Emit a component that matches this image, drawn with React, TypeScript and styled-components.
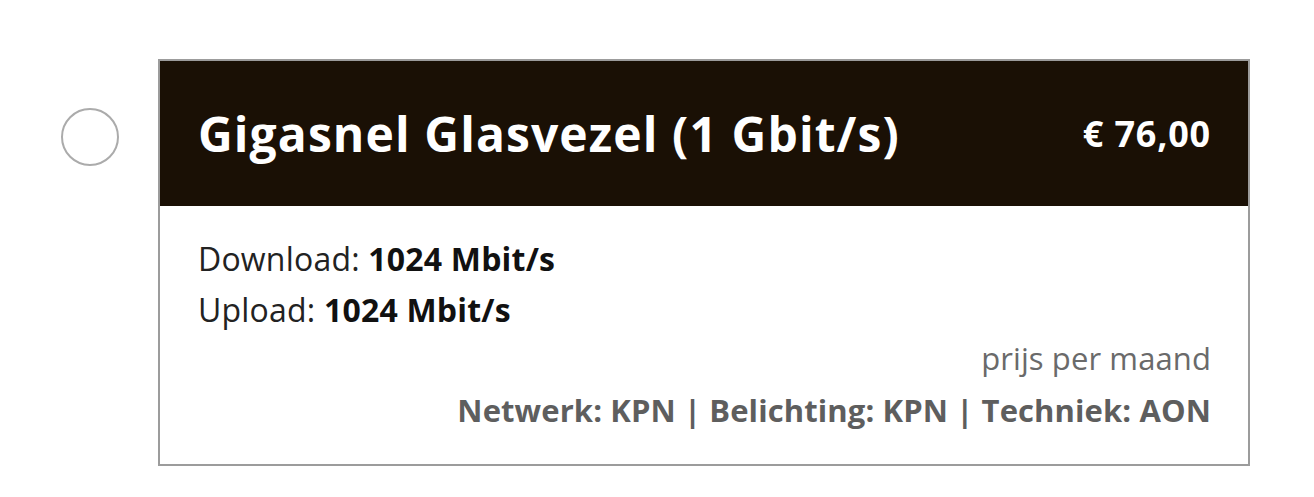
import React from "react";
import styled, { createGlobalStyle } from "styled-components";

const GlobalStyle = createGlobalStyle`
  html, body {
    margin: 0;
    padding: 0;
    background: #ffffff;
  }
  body {
    font-family: "Open Sans", "Noto Sans", "Liberation Sans", sans-serif;
  }
`;

const Page = styled.div`
  display: flex;
  align-items: flex-start;
  padding: 59px 0 0 61px;
`;

const RadioColumn = styled.div`
  width: 97px;
  flex: none;
  padding-top: 49px;
`;

const Radio = styled.span`
  display: block;
  width: 54px;
  height: 54px;
  border: 2px solid #ababab;
  border-radius: 50%;
  background: #fff;
`;

const Card = styled.div`
  width: 1088px;
  border: 2px solid #9c9c9c;
  flex: none;
`;

const Header = styled.div`
  height: 145px;
  background: #1a1005;
  display: flex;
  align-items: center;
  justify-content: space-between;
  padding: 0 37px 0 38px;
  color: #ffffff;
`;

const Title = styled.h2`
  margin: 0;
  font-size: 48px;
  font-weight: 700;
  line-height: 1;
  letter-spacing: 1.1px;
`;

const Price = styled.span`
  font-size: 36px;
  font-weight: 700;
  line-height: 1;
  letter-spacing: 0.8px;
`;

const Body = styled.div`
  padding: 27px 37px 28px 38px;
`;

const SpeedLine = styled.div`
  font-size: 32px;
  letter-spacing: 0.2px;
  line-height: 51px;
  color: #222;
`;

const Value = styled.strong`
  font-weight: 700;
  color: #111;
`;

const Footer = styled.div`
  margin-top: -3px;
  text-align: right;
  font-size: 31px;
  letter-spacing: 0.1px;
`;

const FooterLine = styled.div<{ $bold?: boolean }>`
  line-height: 52px;
  font-weight: ${(p) => (p.$bold ? 700 : 400)};
  color: ${(p) => (p.$bold ? "#5e5e5e" : "#6a6a6a")};
`;

export default function App() {
  return (
    <>
      <GlobalStyle />
      <Page>
        <RadioColumn>
          <Radio />
        </RadioColumn>
        <Card>
          <Header>
            <Title>Gigasnel Glasvezel (1 Gbit/s)</Title>
            <Price>€ 76,00</Price>
          </Header>
          <Body>
            <SpeedLine>
              Download: <Value>1024 Mbit/s</Value>
            </SpeedLine>
            <SpeedLine>
              Upload: <Value>1024 Mbit/s</Value>
            </SpeedLine>
            <Footer>
              <FooterLine>prijs per maand</FooterLine>
              <FooterLine $bold>Netwerk: KPN | Belichting: KPN | Techniek: AON</FooterLine>
            </Footer>
          </Body>
        </Card>
      </Page>
    </>
  );
}
